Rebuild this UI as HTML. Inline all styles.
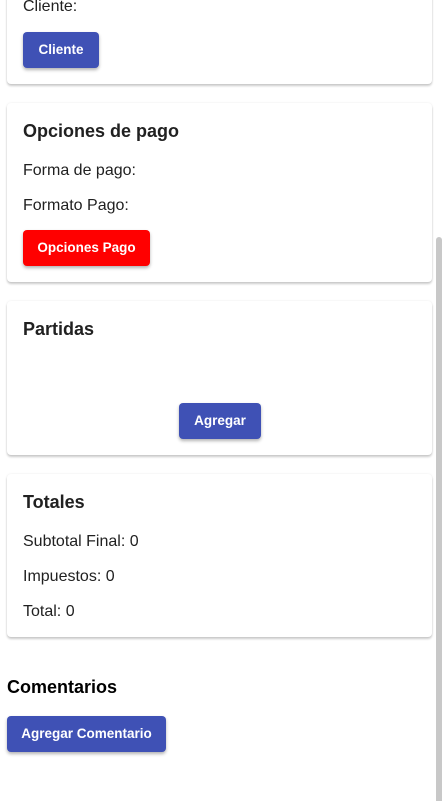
<!DOCTYPE html>
<html><head><style>
body{margin:0;width:442px;height:801px;overflow:hidden;background:#fff;font-family:"Liberation Sans",sans-serif;color:#212121;position:relative}
.card{position:absolute;left:7px;width:425px;background:#fff;border-radius:4px;box-shadow:0 2px 2px rgba(0,0,0,.2),0 0 2px rgba(0,0,0,.08)}
.t{position:absolute;font-size:16px;line-height:20px;white-space:nowrap}
.h{position:absolute;font-size:18px;font-weight:bold;line-height:22px;white-space:nowrap}
.btn{position:absolute;height:36px;line-height:36px;text-align:center;color:#fff;font-size:13.5px;font-weight:bold;border-radius:4px;background:#3f51b5;box-shadow:0 2px 3px rgba(0,0,0,.3)}
.sb{position:absolute;left:436px;top:237px;width:6px;height:564px;background:#c8c8c8;border-radius:3px 3px 0 0}
</style></head><body>
<div class="card" style="top:-10px;height:94px"></div>
<div class="t" style="left:23px;top:-3px">Cliente:</div>
<div class="btn" style="left:23px;top:32px;width:76px">Cliente</div>

<div class="card" style="top:103px;height:179px"></div>
<div class="h" style="left:23px;top:120px">Opciones de pago</div>
<div class="t" style="left:23px;top:161px">Forma de pago:</div>
<div class="t" style="left:23px;top:196px">Formato Pago:</div>
<div class="btn" style="left:23px;top:230px;width:127px;background:#ff0000">Opciones Pago</div>

<div class="card" style="top:301px;height:154px"></div>
<div class="h" style="left:23px;top:318px">Partidas</div>
<div class="btn" style="left:179px;top:403px;width:82px">Agregar</div>

<div class="card" style="top:474px;height:163px"></div>
<div class="h" style="left:23px;top:491px">Totales</div>
<div class="t" style="left:23px;top:532px">Subtotal Final: 0</div>
<div class="t" style="left:23px;top:567px">Impuestos: 0</div>
<div class="t" style="left:23px;top:602px">Total: 0</div>

<div class="h" style="left:7px;top:676px;color:#000">Comentarios</div>
<div class="btn" style="left:7px;top:716px;width:159px">Agregar Comentario</div>
<div class="sb"></div>
</body></html>
